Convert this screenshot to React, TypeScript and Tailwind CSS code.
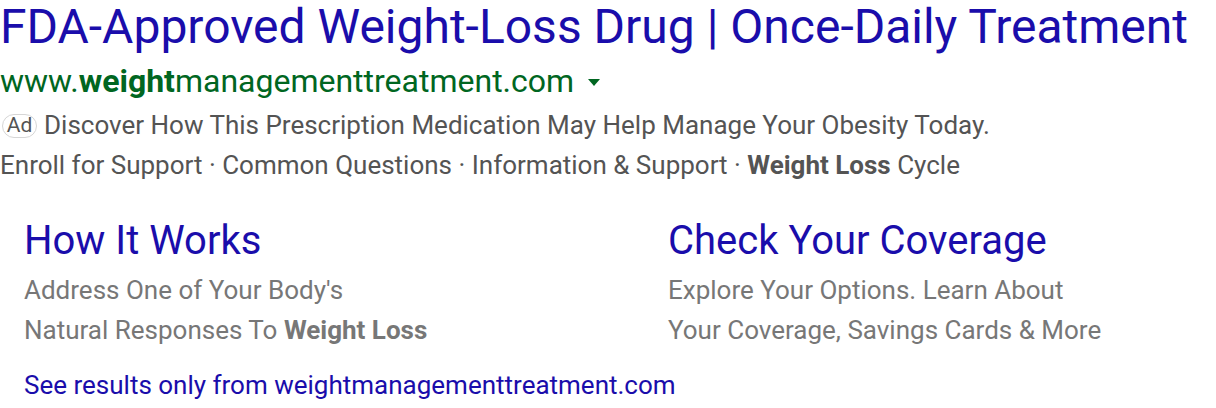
export default function App() {
  return (
    <div className="w-[1216px] h-[408px] bg-white overflow-hidden font-['Roboto',sans-serif]">
      <h1 className="text-[48px] leading-[53px] text-[#1a0dab]">
        FDA-Approved Weight-Loss Drug | Once-Daily Treatment
      </h1>
      <div className="flex items-center text-[32px] leading-[40px] text-[#006621] mt-[8px]">
        <span>
          www.<b className="font-bold">weight</b>managementtreatment.com
        </span>
        <svg width="12" height="7" viewBox="0 0 12 7" className="ml-[14px] mt-[2px]">
          <path d="M0 0h12L6 7z" fill="#006621" />
        </svg>
      </div>
      <div className="flex items-center text-[26px] leading-[39px] text-[#545454] mt-[5px]">
        <span className="inline-flex items-center justify-center h-[24px] w-[35px] ml-[2px] mr-[7px] border border-[#d6d6d6] rounded-[13px] text-[21px] leading-none text-[#545454]">
          Ad
        </span>
        Discover How This Prescription Medication May Help Manage Your Obesity Today.
      </div>
      <div className="text-[26px] leading-[39px] text-[#545454] mt-[1px]">
        Enroll for Support · Common Questions · Information &amp; Support · <b className="font-bold">Weight Loss</b> Cycle
      </div>
      <div className="grid grid-cols-[644px_1fr] pl-[24px] mt-[32px]">
        <div>
          <div className="text-[40px] leading-[48px] text-[#1a0dab]">How It Works</div>
          <div className="text-[26px] leading-[40px] text-[#777] mt-[5px]">Address One of Your Body's</div>
          <div className="text-[26px] leading-[40px] text-[#777]">
            Natural Responses To <b className="font-bold">Weight Loss</b>
          </div>
        </div>
        <div>
          <div className="text-[40px] leading-[48px] text-[#1a0dab]">Check Your Coverage</div>
          <div className="text-[26px] leading-[40px] text-[#777] mt-[5px]">Explore Your Options. Learn About</div>
          <div className="text-[26px] leading-[40px] text-[#777]">Your Coverage, Savings Cards &amp; More</div>
        </div>
      </div>
      <div className="pl-[24px] mt-[15px] text-[26px] leading-[40px] text-[#1a0dab]">
        See results only from weightmanagementtreatment.com
      </div>
    </div>
  );
}
